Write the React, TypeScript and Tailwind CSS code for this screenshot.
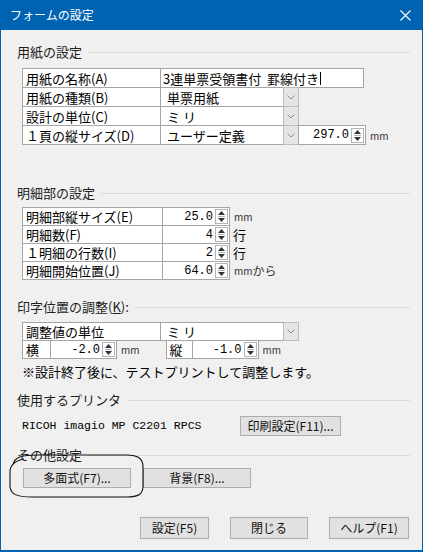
import React from 'react'

const cellBase = 'h-full border border-[#a5a5a5] bg-white flex items-center text-[13px] leading-none'

function Heading({ children }: { children: React.ReactNode }) {
  return (
    <div className="flex items-center h-[18px] gap-[6px]">
      <span className="text-[13px] leading-[18px] text-[#1e1e1e]">{children}</span>
      <div className="flex-1 border-t border-[#dadada]" />
    </div>
  )
}

function Drop() {
  return (
    <div className="w-[16px] h-full -ml-px border border-[#bdbdbd] bg-[#e5e5e5] flex items-center justify-center">
      <svg width="8" height="5" viewBox="0 0 8 5">
        <path d="M0.5 0.5 L4 4 L7.5 0.5" stroke="#8a8a8a" fill="none" />
      </svg>
    </div>
  )
}

function Spin() {
  return (
    <div className="w-[13px] h-[15px] border border-[#b4b4b4] bg-white flex flex-col ml-[2px] shrink-0">
      <div className="flex-1 flex items-center justify-center">
        <svg width="7" height="4" viewBox="0 0 7 4">
          <path d="M0 4 L3.5 0 L7 4Z" fill="#333" />
        </svg>
      </div>
      <div className="border-t border-[#b4b4b4] mx-[2px]" />
      <div className="flex-1 flex items-center justify-center">
        <svg width="7" height="4" viewBox="0 0 7 4">
          <path d="M0 0 L3.5 4 L7 0Z" fill="#333" />
        </svg>
      </div>
    </div>
  )
}

function Num({ value }: { value: string }) {
  return <span className="flex-1 text-right font-['Liberation_Mono',monospace] text-[12px]">{value}</span>
}

function Mm({ suffix }: { suffix?: string }) {
  return (
    <span className="ml-[4px] text-[10px] text-[#333] flex items-center">
      mm{suffix && <span className="text-[12px]">{suffix}</span>}
    </span>
  )
}

function Btn({ children, w }: { children: React.ReactNode; w: string }) {
  return (
    <div
      className={`${w} h-full border border-[#adadad] bg-[#e1e1e1] flex items-center justify-center text-[12px] text-[#111] leading-none`}
    >
      {children}
    </div>
  )
}

export default function App() {
  return (
    <div className="relative w-[423px] h-[552px] bg-[#0063b1] flex flex-col px-px pb-[2px] font-['Noto_Sans_CJK_JP',sans-serif] text-black">
      <div className="h-[30px] flex items-center justify-between pl-[9px] pr-[11px] text-white">
        <span className="text-[12px]">フォームの設定</span>
        <svg width="11" height="11" viewBox="0 0 11 11">
          <path d="M0.5 0.5 L10.5 10.5 M10.5 0.5 L0.5 10.5" stroke="white" strokeWidth="1.1" />
        </svg>
      </div>
      <div className="flex-1 bg-[#f0f0f0] flex flex-col pl-[16px] pr-[12px]">
        <div className="mt-[13px]">
          <Heading>用紙の設定</Heading>
        </div>

        {/* 用紙 */}
        <div className="mt-[7px] ml-[5px] flex flex-col">
          <div className="flex h-[20px]">
            <div className={`${cellBase} w-[139px] pl-[3px]`}>用紙の名称(A)</div>
            <div className={`${cellBase} w-[204px] -ml-px pl-[2px]`}>
              3連単票受領書付&nbsp;&nbsp;罫線付き
              <span className="inline-block w-px h-[13px] bg-black ml-px" />
            </div>
          </div>
          <div className="flex h-[20px] -mt-px">
            <div className={`${cellBase} w-[139px] pl-[3px]`}>用紙の種類(B)</div>
            <div className={`${cellBase} w-[124px] -ml-px pl-[6px]`}>単票用紙</div>
            <Drop />
          </div>
          <div className="flex h-[20px] -mt-px">
            <div className={`${cellBase} w-[139px] pl-[3px]`}>設計の単位(C)</div>
            <div className={`${cellBase} w-[124px] -ml-px pl-[6px]`}>ミ リ</div>
            <Drop />
          </div>
          <div className="flex h-[20px] -mt-px">
            <div className={`${cellBase} w-[139px] pl-[3px]`}>１頁の縦サイズ(D)</div>
            <div className={`${cellBase} w-[124px] -ml-px pl-[6px]`}>ユーザー定義</div>
            <Drop />
            <div className={`${cellBase} w-[68px] -ml-px pr-[1px]`}>
              <Num value="297.0" />
              <Spin />
            </div>
            <Mm />
          </div>
        </div>

        <div className="mt-[39px]">
          <Heading>明細部の設定</Heading>
        </div>

        {/* 明細部 */}
        <div className="mt-[5px] ml-[5px] flex flex-col">
          {[
            ['明細部縦サイズ(E)', '25.0', 'mm'],
            ['明細数(F)', '4', '行'],
            ['１明細の行数(I)', '2', '行'],
            ['明細開始位置(J)', '64.0', 'mmから'],
          ].map(([label, value, unit], i) => (
            <div key={label} className={`flex h-[19px] ${i > 0 ? '-mt-px' : ''}`}>
              <div className={`${cellBase} w-[141px] pl-[3px]`}>{label}</div>
              <div className={`${cellBase} w-[68px] -ml-px pr-[1px]`}>
                <Num value={value} />
                <Spin />
              </div>
              {unit === '行' ? (
                <span className="ml-[3px] text-[13px] flex items-center">行</span>
              ) : unit === 'mm' ? (
                <Mm />
              ) : (
                <Mm suffix="から" />
              )}
            </div>
          ))}
        </div>

        <div className="mt-[18px]">
          <Heading>
            印字位置の調整(<span className="underline">K</span>):
          </Heading>
        </div>

        {/* 印字位置 */}
        <div className="mt-[6px] ml-[5px] flex flex-col">
          <div className="flex h-[19px]">
            <div className={`${cellBase} w-[139px] pl-[3px]`}>調整値の単位</div>
            <div className={`${cellBase} w-[124px] -ml-px pl-[6px]`}>ミ リ</div>
            <Drop />
          </div>
          <div className="flex h-[19px] -mt-px">
            <div className={`${cellBase} w-[29px] pl-[3px]`}>横</div>
            <div className={`${cellBase} w-[67px] -ml-px pr-[1px]`}>
              <Num value="-2.0" />
              <Spin />
            </div>
            <Mm />
            <div className={`${cellBase} w-[27px] ml-[26px] pl-[3px]`}>縦</div>
            <div className={`${cellBase} w-[67px] -ml-px pr-[1px]`}>
              <Num value="-1.0" />
              <Spin />
            </div>
            <Mm />
          </div>
        </div>

        <div className="mt-[4px] ml-[5px] h-[18px] flex items-center text-[13px]">
          ※設計終了後に、テストプリントして調整します。
        </div>

        <div className="mt-[10px]">
          <Heading>使用するプリンタ</Heading>
        </div>

        <div className="mt-[7px] ml-[5px] h-[20px] flex items-center">
          <span className="w-[218px] font-['Liberation_Mono',monospace] text-[11.5px]">RICOH imagio MP C2201 RPCS</span>
          <Btn w="w-[101px]">印刷設定(F11)...</Btn>
        </div>

        <div className="mt-[10px]">
          <Heading>その他設定</Heading>
        </div>

        <div className="mt-[4px] ml-[6px] h-[20px] flex gap-[12px]">
          <Btn w="w-[108px]">多面式(F7)...</Btn>
          <Btn w="w-[108px]">背景(F8)...</Btn>
        </div>

        <div className="mt-[29px] h-[22px] flex justify-end gap-[21px] pr-[1px]">
          <Btn w="w-[69px]">設定(F5)</Btn>
          <Btn w="w-[78px]">閉じる</Btn>
          <Btn w="w-[80px]">ヘルプ(F1)</Btn>
        </div>
      </div>

      {/* hand-drawn annotation loop */}
      <svg className="absolute left-0 top-0 pointer-events-none" width="423" height="552" viewBox="0 0 423 552">
        <path
          d="M13 465 C14 457 22 455 38 455 L126 455 C139 455 143 459 143 467 L143 486 C143 494 139 497 126 497 L32 497 C16 497 11 494 10 487 L10 472 C10 465 14 461 24 459"
          stroke="#111"
          strokeWidth="1.1"
          fill="none"
        />
      </svg>
    </div>
  )
}
